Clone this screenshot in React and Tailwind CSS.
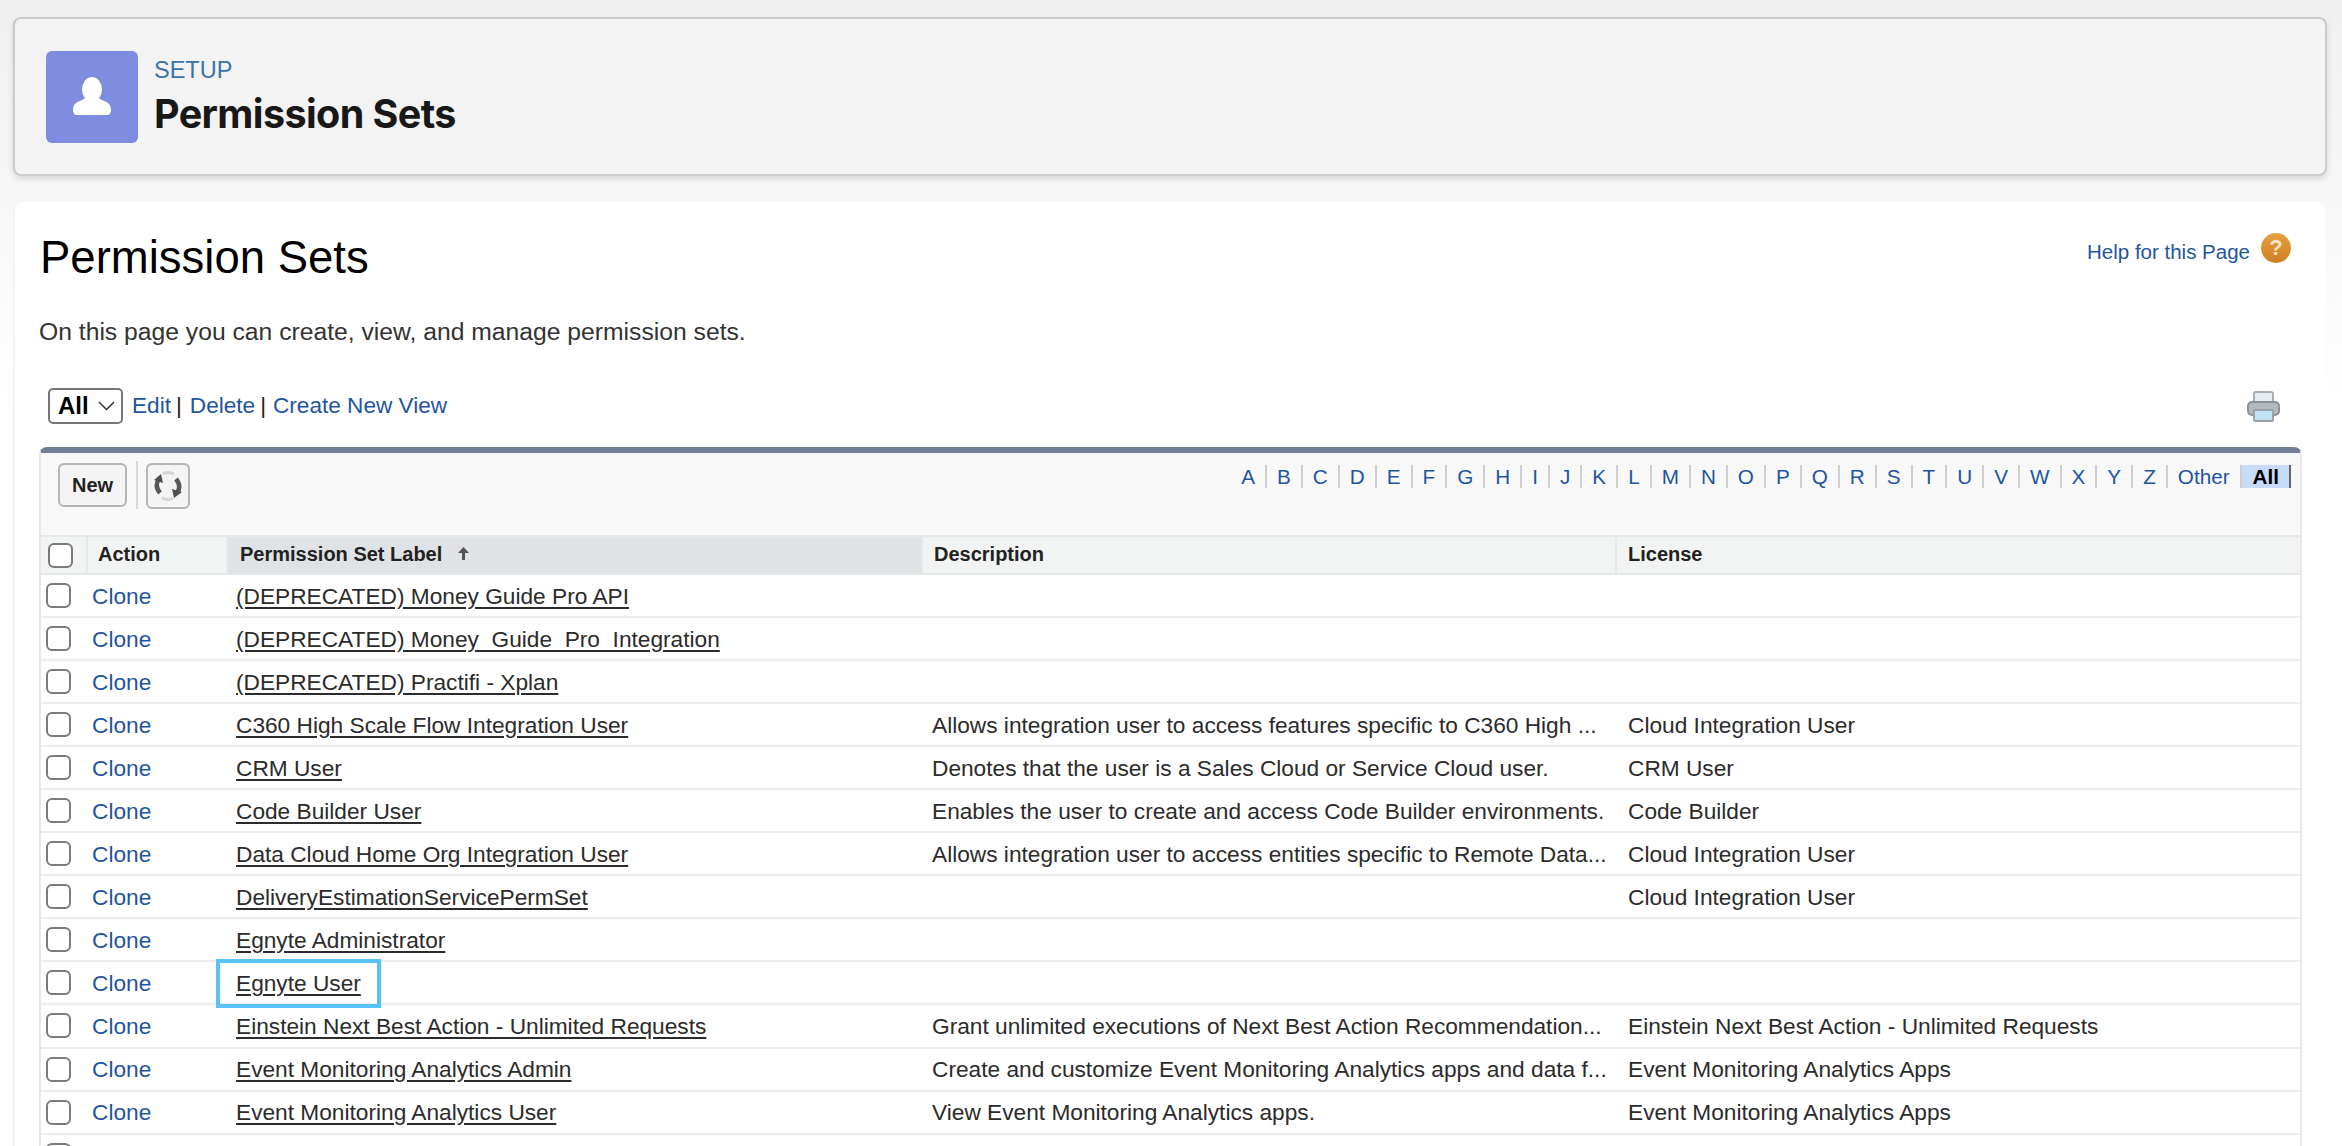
const LETTERS = 'ABCDEFGHIJKLMNOPQRSTUVWXYZ'.split('');

const ROWS = [
  { label: '(DEPRECATED) Money Guide Pro API' },
  { label: '(DEPRECATED) Money_Guide_Pro_Integration' },
  { label: '(DEPRECATED) Practifi - Xplan' },
  {
    label: 'C360 High Scale Flow Integration User',
    description: 'Allows integration user to access features specific to C360 High ...',
    license: 'Cloud Integration User',
  },
  {
    label: 'CRM User',
    description: 'Denotes that the user is a Sales Cloud or Service Cloud user.',
    license: 'CRM User',
  },
  {
    label: 'Code Builder User',
    description: 'Enables the user to create and access Code Builder environments.',
    license: 'Code Builder',
  },
  {
    label: 'Data Cloud Home Org Integration User',
    description: 'Allows integration user to access entities specific to Remote Data...',
    license: 'Cloud Integration User',
  },
  { label: 'DeliveryEstimationServicePermSet', license: 'Cloud Integration User' },
  { label: 'Egnyte Administrator' },
  { label: 'Egnyte User', highlight: true },
  {
    label: 'Einstein Next Best Action - Unlimited Requests',
    description: 'Grant unlimited executions of Next Best Action Recommendation...',
    license: 'Einstein Next Best Action - Unlimited Requests',
  },
  {
    label: 'Event Monitoring Analytics Admin',
    description: 'Create and customize Event Monitoring Analytics apps and data f...',
    license: 'Event Monitoring Analytics Apps',
  },
  {
    label: 'Event Monitoring Analytics User',
    description: 'View Event Monitoring Analytics apps.',
    license: 'Event Monitoring Analytics Apps',
  },
  {},
];

const Checkbox = () => (
  <span className="block w-[25px] h-[25px] rounded-[6px] border-2 border-[#7a7a7a] bg-white" />
);

const UserIcon = () => (
  <svg width="40" height="40" viewBox="0 0 40 40" fill="#fff">
    <ellipse cx="20" cy="12.500" rx="10" ry="12.500" />
    <path d="M1 33c0-6 4-8 8-9.500 2-.8 3-1.500 4-2.500 2 1.800 4.500 2.500 7 2.500s5-.7 7-2.500c1 1 2 1.700 4 2.500 4 1.500 8 3.500 8 9.500 0 3-1.500 5-4 5H5c-2.500 0-4-2-4-5z" />
  </svg>
);

const RefreshIcon = () => (
  <svg width="32" height="30" viewBox="0 0 32 30" className="blur-[0.7px]">
    <path d="M8 22C4 17 4 12 7 8" fill="none" stroke="#55575b" strokeWidth="4.500" />
    <path d="M2 9l7-6 2 9z" fill="#4d4f53" />
    <path d="M24 8c4 5 4 10 1 14" fill="none" stroke="#55575b" strokeWidth="4.500" />
    <path d="M30 21l-8 6-2-9z" fill="#4d4f53" />
    <path d="M11 3c3-2 7-2 11 0" fill="none" stroke="#d4d5d8" strokeWidth="3" />
    <path d="M21 27c-3 2-7 2-11 0" fill="none" stroke="#d4d5d8" strokeWidth="3" />
  </svg>
);

const PrintIcon = () => (
  <svg width="33" height="31" viewBox="0 0 33 31">
    <rect x="7" y="1" width="19" height="12" rx="2" fill="#e6edf2" stroke="#a6adb3" strokeWidth="2" />
    <rect x="1" y="11" width="31" height="13" rx="4" fill="#b4b9bd" stroke="#8c9297" strokeWidth="2" />
    <rect x="7" y="19" width="19" height="11" rx="1" fill="#bfe3f2" stroke="#9aa2a8" strokeWidth="2" />
  </svg>
);

const Row = ({ label, description, license, highlight }) => (
  <div className="grid grid-cols-[47px_148px_696px_696px_1fr] items-center h-[43.06px] border-b-2 border-[#ededed] text-[22.7px] text-[#2b2b2b] whitespace-nowrap">
    <div className="pl-[5px]">
      <Checkbox />
    </div>
    {label && <a className="pl-[4px] text-[#1f559f]">Clone</a>}
    <div className="relative">
      <a className="underline underline-offset-[3px]">{label}</a>
      {highlight && (
        <span className="absolute left-[-20px] top-[-7px] w-[165px] h-[49px] border-[4px] border-[#5bc2f7]" />
      )}
    </div>
    <div>{description}</div>
    <div>{license}</div>
  </div>
);

const HeaderCell = ({ children, sorted, inset = 'pl-[11px]' }) => (
  <div
    className={`flex items-center gap-4 pb-[3px] h-full border-l-2 border-[#e8e9e9] text-[20px] font-bold text-[#222] ${inset} ${
      sorted ? 'bg-[#e0e3e5]' : 'bg-[#f2f3f3]'
    }`}
  >
    {children}
  </div>
);

export default function App() {
  return (
    <div className="h-[1146px] overflow-hidden bg-gradient-to-b from-[#f0f0f0] to-white to-[420px] pl-[13px] pr-[13px] pt-[17px] font-['Liberation_Sans',sans-serif]">
      {/* Page header */}
      <div className="flex items-center gap-4 h-[159px] pl-[31px] mr-[2px] rounded-lg border-2 border-[#cbcbcb] bg-[#f3f3f3] shadow-[0_3px_6px_rgba(0,0,0,0.12)]">
        <div className="flex items-center justify-center w-[92px] h-[92px] rounded-md bg-[#7f8de1]">
          <UserIcon />
        </div>
        <div className="mt-[-2px]">
          <div className="text-[23.5px] leading-[30px] text-[#3a73a8]">SETUP</div>
          <div className="mt-[6px] text-[39.5px] leading-[46px] font-bold text-[#181818] font-['Inter',sans-serif] tracking-[-0.6px]">
            Permission Sets
          </div>
        </div>
      </div>

      {/* Main card */}
      <div className="mt-[26px] mr-[3px] h-[960px] rounded-t-lg border-l-2 border-[#f3f3f3] bg-white pl-[24px] pr-[24px]">
        <div className="flex justify-between items-start h-[116px] pt-[28px]">
          <h1 className="pl-[1px] text-[45.5px] leading-[56px] text-black">Permission Sets</h1>
          <div className="flex items-start gap-[11px] pr-[11px] pt-[3px]">
            <a className="mt-[7px] text-[20.5px] leading-[24px] text-[#1f559f]">Help for this Page</a>
            <span className="flex items-center justify-center w-[30px] h-[30px] rounded-full bg-gradient-to-b from-[#e6a03f] to-[#cf7f22] text-[22px] font-bold leading-none text-[#f6e5c8]">
              ?
            </span>
          </div>
        </div>

        <p className="text-[24.7px] leading-[28px] text-[#333]">
          On this page you can create, view, and manage permission sets.
        </p>

        {/* View picker */}
        <div className="flex items-center justify-between mt-[42px] pl-[9px] pr-[22px] h-[36px] text-[22.6px] text-[#222]">
          <div className="flex items-center">
            <div className="flex items-center justify-between w-[75px] h-[36px] pl-[8px] pr-[6px] rounded-[5px] border-2 border-[#777] text-[24px] font-bold text-black">
              All
              <svg width="17" height="10" viewBox="0 0 17 10" fill="none" stroke="#333" strokeWidth="1.500">
                <path d="M1 1l7.500 7.500L16 1" />
              </svg>
            </div>
            <a className="ml-[9px] text-[#1f559f]">Edit</a>
            <span className="ml-[5px] mr-[8px]">|</span>
            <a className="text-[#1f559f]">Delete</a>
            <span className="ml-[5px] mr-[7px]">|</span>
            <a className="text-[#1f559f]">Create New View</a>
          </div>
          <PrintIcon />
        </div>

        {/* List table */}
        <div className="mt-[23px] rounded-t-lg border-t-[6px] border-x-2 border-t-[#747e96] border-x-[#e8e8e8]">
          <div className="flex justify-between h-[82px] bg-[#f8f8f8] pt-[10px] pl-[17px] pr-[9px]">
            <div className="flex items-start">
              <button className="w-[69px] h-[44px] rounded-[6px] border-2 border-[#b5b5b5] bg-[#f4f4f4] text-[20px] font-bold text-[#222]">
                New
              </button>
              <span className="ml-[9px] mt-[-2px] w-[2px] h-[48px] bg-[#d8d8d8]" />
              <button className="flex items-center justify-center ml-[8px] w-[44px] h-[46px] rounded-[6px] border-2 border-[#b5b5b5] bg-[#f4f4f4]">
                <RefreshIcon />
              </button>
            </div>
            <div className="flex items-start mt-[2px] h-[23px] text-[20.7px] leading-[23px] text-[#1f559f]">
              {LETTERS.map((l) => (
                <a key={l} className="px-[10px] border-r-2 border-[#cfcfcf]">
                  {l}
                </a>
              ))}
              <a className="pl-[10px] pr-[10px] border-r-2 border-[#cfcfcf]">Other</a>
              <span className="pl-[11px] pr-[10px] bg-[#c6dcf8] font-bold text-black border-r-2 border-[#666]">
                All
              </span>
            </div>
          </div>

          <div className="grid grid-cols-[45px_140px_695px_694px_1fr] items-center h-[40px] border-t-2 border-b-2 border-[#e6e7e7] bg-[#f2f3f3]">
            <div className="pl-[7px]">
              <Checkbox />
            </div>
            <HeaderCell inset="pl-[10px]">Action</HeaderCell>
            <HeaderCell sorted inset="pl-[12px]">
              Permission Set Label
              <svg width="11" height="13" viewBox="0 0 11 13" fill="#555">
                <path d="M5.500 0L11 6H7v7H4V6H0z" />
              </svg>
            </HeaderCell>
            <HeaderCell>Description</HeaderCell>
            <HeaderCell>License</HeaderCell>
          </div>

          {ROWS.map((row, i) => (
            <Row key={i} {...row} />
          ))}
        </div>
      </div>
    </div>
  );
}
